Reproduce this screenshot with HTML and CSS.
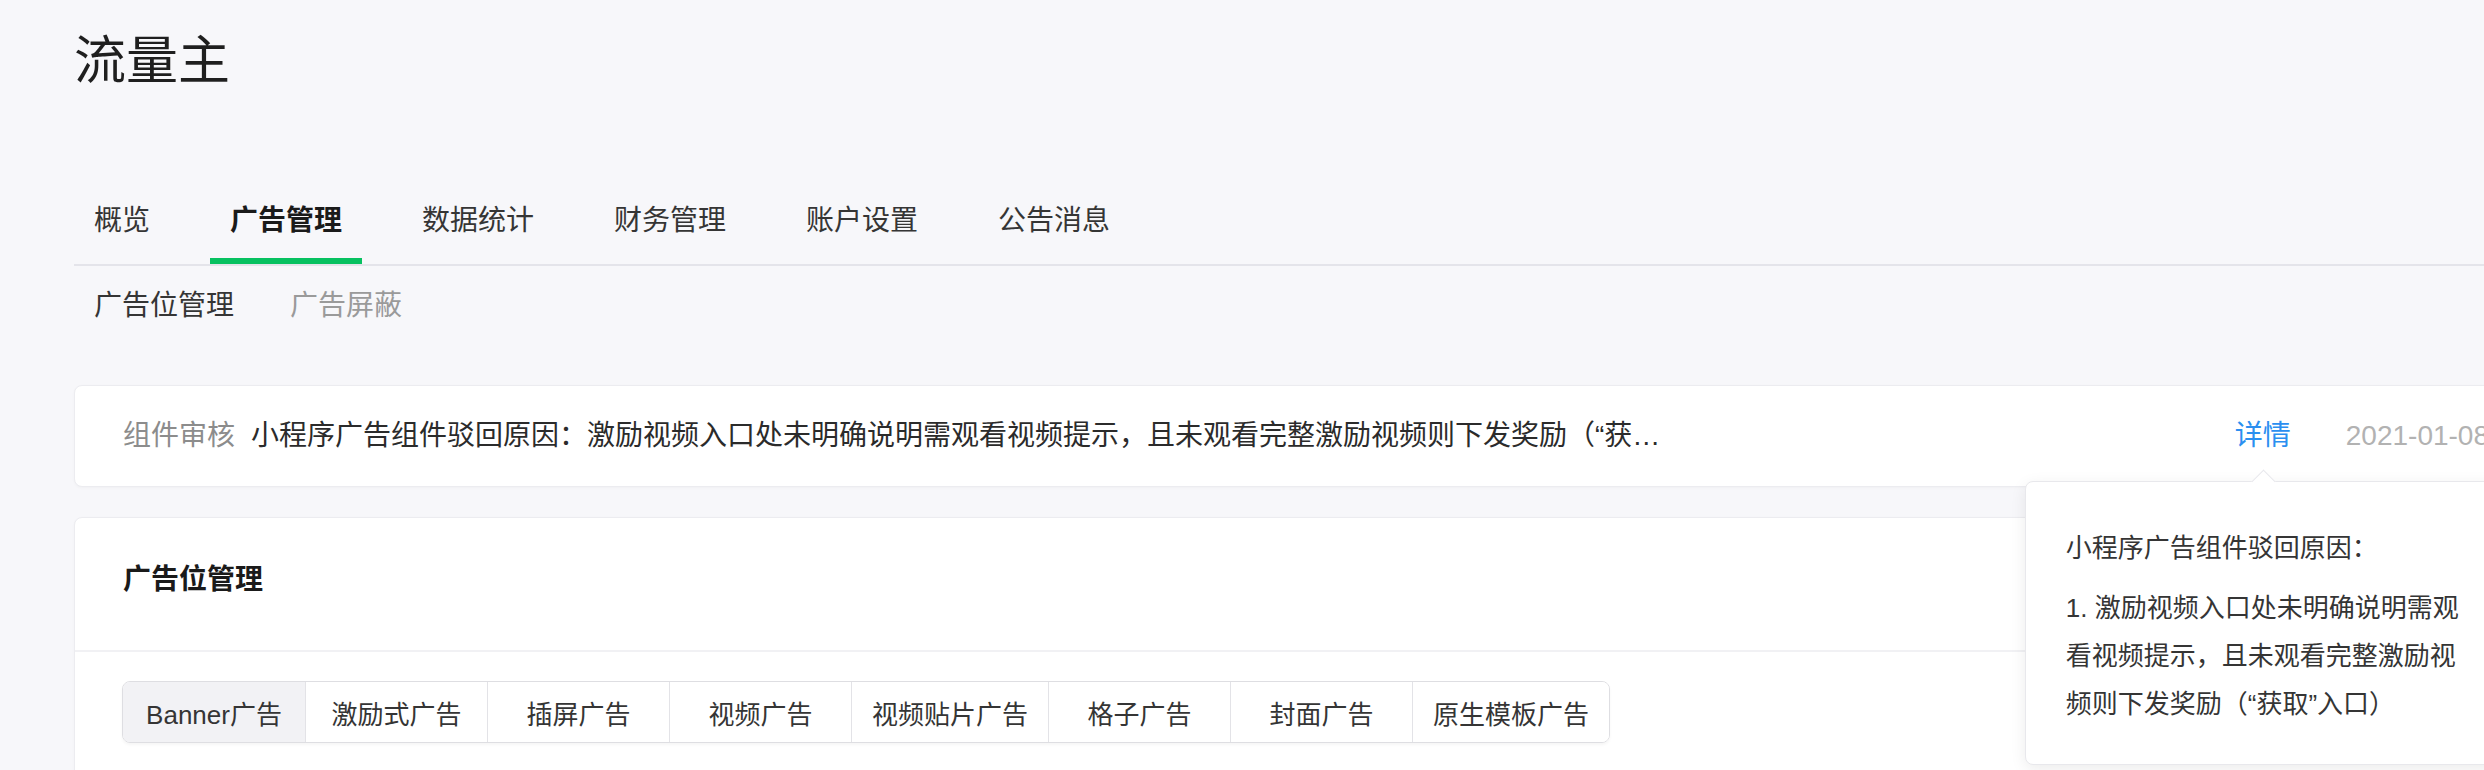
FILE: index.html
```html
<!DOCTYPE html>
<html lang="zh-CN">
<head>
    <meta charset="UTF-8">
    <meta name="viewport" content="width=device-width, initial-scale=1.0">
    <title>流量主</title>
    <link rel="stylesheet" href="styles.css">
</head>
<body>
    <div class="page">
        <h1 class="page-title">流量主</h1>

        <!-- Main navigation -->
        <nav class="main-tabs">
            <a class="main-tab">概览</a>
            <a class="main-tab active">广告管理</a>
            <a class="main-tab">数据统计</a>
            <a class="main-tab">财务管理</a>
            <a class="main-tab">账户设置</a>
            <a class="main-tab">公告消息</a>
        </nav>

        <div class="sub-tabs">
            <a class="sub-tab active">广告位管理</a>
            <a class="sub-tab">广告屏蔽</a>
        </div>

        <!-- Review notice -->
        <div class="notice-card">
            <span class="notice-label">组件审核</span>
            <span class="notice-text">小程序广告组件驳回原因：激励视频入口处未明确说明需观看视频提示，且未观看完整激励视频则下发奖励（“获取”入口）</span>
            <span class="notice-link">
                详情
                <div class="popover">
                    <p class="popover-title">小程序广告组件驳回原因：</p>
                    <p class="popover-text">1. 激励视频入口处未明确说明需观看视频提示，且未观看完整激励视频则下发奖励（“获取”入口）</p>
                </div>
            </span>
            <span class="notice-date">2021-01-08</span>
        </div>

        <!-- Ad slots -->
        <div class="panel">
            <div class="panel-header">
                <h2 class="panel-title">广告位管理</h2>
            </div>
            <div class="panel-body">
                <div class="seg-group">
                    <button class="seg-item active">Banner广告</button>
                    <button class="seg-item">激励式广告</button>
                    <button class="seg-item">插屏广告</button>
                    <button class="seg-item">视频广告</button>
                    <button class="seg-item">视频贴片广告</button>
                    <button class="seg-item">格子广告</button>
                    <button class="seg-item">封面广告</button>
                    <button class="seg-item">原生模板广告</button>
                </div>
            </div>
        </div>
    </div>
</body>
</html>
```

FILE: styles.css
```css
html,
body {
    overflow: hidden;
}

body {
    margin: 0;
    padding: 0;
    background-color: #f7f7fa;
    font-family: "Liberation Sans", "Noto Sans CJK SC", sans-serif;
    color: #333;
}

.page {
    width: 2466px;
    padding-left: 74px;
}

.page-title {
    margin: 0;
    padding-top: 25px;
    font-size: 52px;
    line-height: 72px;
    font-weight: normal;
    color: #1f1f1f;
}

.main-tabs {
    display: flex;
    gap: 40px;
    margin-top: 104px;
    border-bottom: 2px solid #e4e4ea;
}

.main-tab {
    padding: 0 20px 17px;
    font-size: 28px;
    line-height: 40px;
    color: #353535;
    border-bottom: 6px solid transparent;
    cursor: pointer;
}

.main-tab.active {
    font-weight: 600;
    color: #1a1a1a;
    border-bottom-color: #07c160;
}

.sub-tabs {
    display: flex;
    gap: 16px;
    margin-top: 20px;
}

.sub-tab {
    padding: 0 20px;
    font-size: 28px;
    line-height: 40px;
    color: #9a9a9a;
    cursor: pointer;
}

.sub-tab.active {
    color: #353535;
}

.notice-card {
    display: flex;
    align-items: center;
    margin-top: 59px;
    padding: 30px 50px 30px 48px;
    background-color: white;
    border: 1px solid #ececf0;
    border-radius: 8px;
    box-shadow: 0 1px 3px rgba(0, 0, 0, 0.03);
    font-size: 28px;
    line-height: 40px;
}

.notice-label {
    flex-shrink: 0;
    margin-right: 16px;
    color: #8c8c8c;
}

.notice-text {
    max-width: 1420px;
    white-space: nowrap;
    overflow: hidden;
    text-overflow: ellipsis;
    color: #2b2b2b;
}

.notice-link {
    position: relative;
    flex-shrink: 0;
    margin-left: auto;
    color: #2b8ff0;
    cursor: pointer;
}

.notice-date {
    flex-shrink: 0;
    margin-left: 55px;
    color: #b2b2b2;
}

/* Popover under the detail link */
.popover {
    position: absolute;
    top: calc(100% + 25px);
    left: -210px;
    z-index: 10;
    width: 400px;
    padding: 42px 40px 36px;
    background-color: white;
    border: 1px solid #e8e8ec;
    border-radius: 8px;
    box-shadow: 0 4px 16px rgba(0, 0, 0, 0.08);
    font-size: 26px;
    line-height: 48px;
    color: #353535;
}

.popover::before {
    content: '';
    position: absolute;
    top: -9px;
    left: 229px;
    width: 16px;
    height: 16px;
    background-color: white;
    border-top: 1px solid #e8e8ec;
    border-left: 1px solid #e8e8ec;
    transform: rotate(45deg);
}

.popover-title {
    margin: 0 0 12px;
}

.popover-text {
    margin: 0;
}

.panel {
    margin-top: 30px;
    background-color: white;
    border: 1px solid #ececf0;
    border-radius: 8px;
    box-shadow: 0 1px 3px rgba(0, 0, 0, 0.03);
}

.panel-header {
    padding: 42px 48px 50px;
    border-bottom: 2px solid #f1f1f4;
}

.panel-title {
    margin: 0;
    font-size: 28px;
    line-height: 40px;
    font-weight: 600;
    color: #1a1a1a;
}

.panel-body {
    padding: 29px 48px 40px 47px;
}

.seg-group {
    display: inline-flex;
    border: 1px solid #dedee2;
    border-radius: 8px;
    overflow: hidden;
    box-shadow: 0 2px 3px rgba(0, 0, 0, 0.04);
}

.seg-item {
    box-sizing: border-box;
    min-width: 182px;
    height: 60px;
    padding: 0 20px;
    margin: 0;
    background-color: white;
    border: none;
    border-left: 1px solid #e3e3e7;
    font-family: inherit;
    font-size: 26px;
    color: #353535;
    cursor: pointer;
}

.seg-item:first-child {
    border-left: none;
}

.seg-item.active {
    background-color: #f2f2f5;
}
```
